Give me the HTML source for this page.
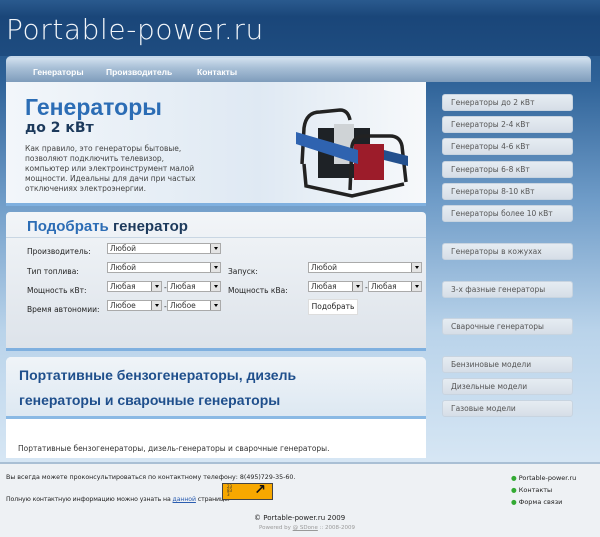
<!DOCTYPE html>
<html><head><meta charset="utf-8"><style>
*{margin:0;padding:0;box-sizing:border-box}
body{width:600px;height:537px;overflow:hidden;font-family:"DejaVu Sans","Liberation Sans",sans-serif;background:linear-gradient(180deg,#1f4d80 0px,#2e6298 80px,#6f9cc8 200px,#b9d3ea 330px,#d6e6f4 460px);position:relative}
.abs{position:absolute}
#hdr{left:0;top:0;width:600px;height:56px;background:linear-gradient(180deg,#2a5a8e,#1a4679 30%,#1e4c80);}
#logo{left:6px;top:13px;font-family:"DejaVu Sans",sans-serif;font-size:28px;font-weight:300;letter-spacing:0.6px;color:#f2f6fa}
#nav{left:6px;top:56px;width:585px;height:26px;border-radius:5px 5px 0 0;background:linear-gradient(180deg,#d2e0ee,#a9c0d7 40%,#7e9cbb);border-top:2px solid #c6d8ea}
#nav span{position:absolute;top:9px;font-size:8.5px;font-weight:bold;color:#fff;font-family:"Liberation Sans",sans-serif}
#ban{left:6px;top:82px;width:420px;height:124px;background:linear-gradient(90deg,#f2f6fa,#dfe9f3 60%,#f7f9fb);border-bottom:3px solid #7fb0df;overflow:hidden}
#form{left:6px;top:212px;width:420px;height:139px;background:linear-gradient(180deg,#f2f5f8,#dde3ea);border-bottom:3px solid #7fb0df;border-radius:4px 4px 0 0}
.lbl{position:absolute;font-size:7.5px;color:#222}
.sel{position:absolute;height:11px;background:#fff;border:1px solid #aaa;font-size:7.5px;color:#333;padding-left:2px;line-height:9px}
.sel:after{content:"";position:absolute;right:0;top:0;width:9px;height:9px;background:#e4e4e4;border-left:1px solid #888}
.sel i{position:absolute;right:2px;top:3px;border:2.5px solid transparent;border-top:3px solid #000;z-index:2}
#bot{left:6px;top:357px;width:420px;height:101px;background:#fff;border-radius:5px 5px 0 0}
#both{left:6px;top:357px;width:420px;height:62px;background:linear-gradient(180deg,#f0f4f8,#dde8f2);border-bottom:3px solid #8ab9e4;border-radius:5px 5px 0 0}
.sb{position:absolute;left:442px;width:131px;height:17px;border-radius:3px;background:linear-gradient(180deg,#e6ecf2,#d6dee7);border:1px solid #c8d4e0;font-size:7.5px;color:#555;padding-left:8px;line-height:15px}
#foot{left:0;top:462px;width:600px;height:75px;background:#eef1f4;border-top:2px solid #a9bfd4}
.ft{position:absolute;font-size:6px;color:#222}
</style></head><body>
<div id="hdr" class="abs"></div>
<div id="logo" class="abs">Portable-power.ru</div>
<div id="nav" class="abs"><span style="left:27px">Генераторы</span><span style="left:100px">Производитель</span><span style="left:191px">Контакты</span></div>
<div id="ban" class="abs">
<div class="abs" style="left:19px;top:12px;font-size:23px;color:#2c6db5;font-weight:bold;font-family:'Liberation Sans',sans-serif">Генераторы</div>
<div class="abs" style="left:19px;top:38px;font-size:14px;color:#1d3a5c;font-weight:bold">до 2 кВт</div>
<div class="abs" style="left:19px;top:62px;width:172px;font-size:7.5px;line-height:10px;color:#444">Как правило, это генераторы бытовые, позволяют подключить телевизор, компьютер или электроинструмент малой мощности. Идеальны для дачи при частых отключениях электроэнергии.</div>
<svg class="abs" style="left:284px;top:18px" width="136" height="104" viewBox="0 0 136 104">
<rect x="28" y="28" width="52" height="50" fill="#1e2226"/>
<rect x="44" y="24" width="20" height="40" fill="#cfd3d6"/>
<rect x="64" y="44" width="30" height="36" fill="#9c1c2a"/>
<path d="M12 64 L14 28 Q16 12 30 12 L50 10 Q58 10 60 20" fill="none" stroke="#222" stroke-width="3.5"/>
<path d="M60 90 L62 46 Q64 36 74 36 L100 36 Q110 36 112 46 L116 82" fill="none" stroke="#222" stroke-width="3.5"/>
<path d="M6 32 L68 50 L68 64 L6 44Z" fill="#2f63b0"/>
<path d="M94 50 L118 56 L118 66 L94 60Z" fill="#23508e"/>
<path d="M14 64 L16 86 L62 96 L114 84" fill="none" stroke="#222" stroke-width="3.5"/>
</svg>
</div>
<div id="form" class="abs">
<div class="abs" style="left:21px;top:6px;font-size:15px;font-weight:bold;color:#2c6db5;font-family:'Liberation Sans',sans-serif">Подобрать <span style="color:#1d3a5c">генератор</span></div>
<div class="abs" style="left:0;top:25px;width:420px;height:1px;background:#c9d6e3"></div>
<div class="lbl" style="left:21px;top:35px">Производитель:</div>
<div class="sel" style="left:101px;top:31px;width:114px">Любой<i></i></div>
<div class="lbl" style="left:21px;top:55px">Тип топлива:</div>
<div class="sel" style="left:101px;top:50px;width:114px">Любой<i></i></div>
<div class="lbl" style="left:222px;top:55px">Запуск:</div>
<div class="sel" style="left:302px;top:50px;width:114px">Любой<i></i></div>
<div class="lbl" style="left:21px;top:74px">Мощность кВт:</div>
<div class="sel" style="left:101px;top:69px;width:55px">Любая<i></i></div><div class="lbl" style="left:158px;top:71px">-</div>
<div class="sel" style="left:161px;top:69px;width:54px">Любая<i></i></div>
<div class="lbl" style="left:222px;top:74px">Мощность кВа:</div>
<div class="sel" style="left:302px;top:69px;width:55px">Любая<i></i></div><div class="lbl" style="left:359px;top:71px">-</div>
<div class="sel" style="left:362px;top:69px;width:54px">Любая<i></i></div>
<div class="lbl" style="left:21px;top:93px">Время автономии:</div>
<div class="sel" style="left:101px;top:88px;width:55px">Любое<i></i></div><div class="lbl" style="left:158px;top:90px">-</div>
<div class="sel" style="left:161px;top:88px;width:54px">Любое<i></i></div>
<div class="abs" style="left:302px;top:87px;width:50px;height:16px;background:#fff;border:1px solid #ddd;font-size:7.5px;line-height:14px;text-align:center;color:#222">Подобрать</div>
</div>
<div id="bot" class="abs"></div>
<div id="both" class="abs">
<div class="abs" style="left:13px;top:6px;width:340px;font-size:14px;line-height:25px;font-weight:bold;color:#1f4f8c;font-family:'Liberation Sans',sans-serif">Портативные бензогенераторы, дизель генераторы и сварочные генераторы</div>
</div>
<div class="abs" style="left:18px;top:444px;font-size:7.5px;color:#333">Портативные бензогенераторы, дизель-генераторы и сварочные генераторы.</div>
<div class="sb" style="top:94px">Генераторы до 2 кВт</div>
<div class="sb" style="top:116px">Генераторы 2-4 кВт</div>
<div class="sb" style="top:138px">Генераторы 4-6 кВт</div>
<div class="sb" style="top:161px">Генераторы 6-8 кВт</div>
<div class="sb" style="top:183px">Генераторы 8-10 кВт</div>
<div class="sb" style="top:205px">Генераторы более 10 кВт</div>
<div class="sb" style="top:243px">Генераторы в кожухах</div>
<div class="sb" style="top:281px">3-х фазные генераторы</div>
<div class="sb" style="top:318px">Сварочные генераторы</div>
<div class="sb" style="top:356px">Бензиновые модели</div>
<div class="sb" style="top:378px">Дизельные модели</div>
<div class="sb" style="top:400px">Газовые модели</div>
<div id="foot" class="abs"></div>
<div class="ft" style="left:6px;top:474px;font-size:6.3px">Вы всегда можете проконсультироваться по контактному телефону: 8(495)729-35-60.</div>
<div class="ft" style="left:6px;top:496px;font-size:6.2px;letter-spacing:-0.1px">Полную контактную информацию можно узнать на <u style="color:#2a5db0">данной</u> странице.</div>
<div class="abs" style="left:222px;top:483px;width:51px;height:17px;background:#f7a800;border:1px solid #444"><span class="abs" style="left:4px;top:1px;font-size:4px;line-height:4px;color:#333">23<br>83<br>3</span><span class="abs" style="right:6px;top:-2px;font-size:14px;font-weight:bold;color:#111">↗</span></div>
<div class="ft" style="left:254px;top:514px;font-size:7px">© Portable-power.ru 2009</div>
<div class="ft" style="left:259px;top:525px;font-size:5.5px;color:#999">Powered by <u>@ SDone</u> :: 2008-2009</div>
<div class="ft" style="left:511px;top:474px;font-size:6.5px"><span style="color:#3a3">●</span> Portable-power.ru</div>
<div class="ft" style="left:511px;top:486px;font-size:6.5px"><span style="color:#3a3">●</span> Контакты</div>
<div class="ft" style="left:511px;top:498px;font-size:6.5px"><span style="color:#3a3">●</span> Форма связи</div>
</body></html>
